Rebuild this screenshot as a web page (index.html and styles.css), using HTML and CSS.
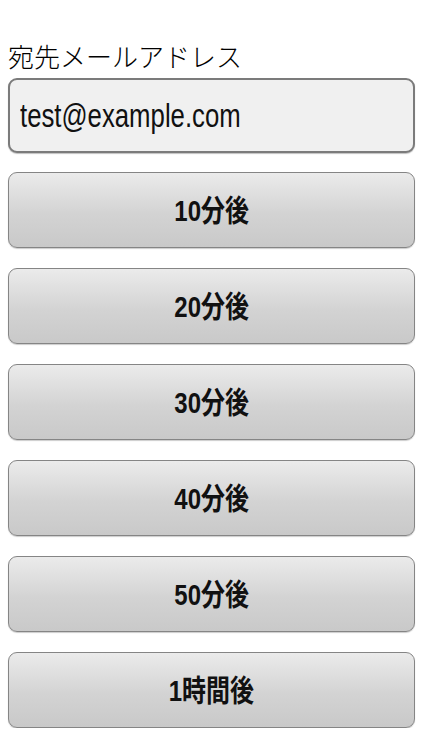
FILE: index.html
```html
<!DOCTYPE html>
<html lang="ja">
<head>
  <meta charset="UTF-8" />
  <meta name="viewport" content="width=device-width, initial-scale=1.0"/>
  <title>メール予約</title>
  <link rel="stylesheet" href="styles.css">
</head>
<body>

  <div class="container">
    <label class="label" for="address">宛先メールアドレス</label>
    <div class="field">
      <span class="field-text" id="address">test@example.com</span>
    </div>

    <div class="buttons">
      <button class="btn"><span>10分後</span></button>
      <button class="btn"><span>20分後</span></button>
      <button class="btn"><span>30分後</span></button>
      <button class="btn"><span>40分後</span></button>
      <button class="btn"><span>50分後</span></button>
      <button class="btn"><span>1時間後</span></button>
    </div>
  </div>

</body>
</html>
```

FILE: styles.css
```css
body {
  margin: 0;
  background: #ffffff;
  color: #111111;
  font-family: 'Liberation Sans', 'Noto Sans CJK JP', sans-serif;
}

.container {
  padding: 42px 8px 0 8px;
  display: flex;
  flex-direction: column;
}

.label {
  display: block;
  font-family: 'Liberation Serif', 'Noto Sans CJK JP', serif;
  font-weight: 300;
  font-size: 26px;
  line-height: 34px;
  color: #000;
}

.field {
  height: 71px;
  margin-top: 2px;
  border: 2px solid #7b7b7b;
  border-radius: 9px;
  background: #f0f0f0;
  display: flex;
  align-items: center;
  padding-left: 10px;
  box-shadow: 0 1px 1px rgba(0,0,0,0.25);
}

.field-text {
  display: inline-block;
  font-size: 33px;
  color: #111;
  transform: scaleX(0.78);
  transform-origin: left center;
}

.buttons {
  display: flex;
  flex-direction: column;
  gap: 20px;
  margin-top: 19px;
}

.btn {
  height: 76px;
  width: 100%;
  border: 1.5px solid #858585;
  border-radius: 9px;
  background: linear-gradient(#ebebeb, #d3d3d3 55%, #c9c9c9);
  box-shadow: 0 1px 1px rgba(0,0,0,0.2);
  font-family: 'Liberation Sans', 'Noto Sans CJK JP', sans-serif;
  font-weight: bold;
  font-size: 30px;
  color: #111;
  padding: 0 0 4px 0;
  cursor: pointer;
}

.btn span {
  display: inline-block;
  transform: scaleX(0.8);
}
```
